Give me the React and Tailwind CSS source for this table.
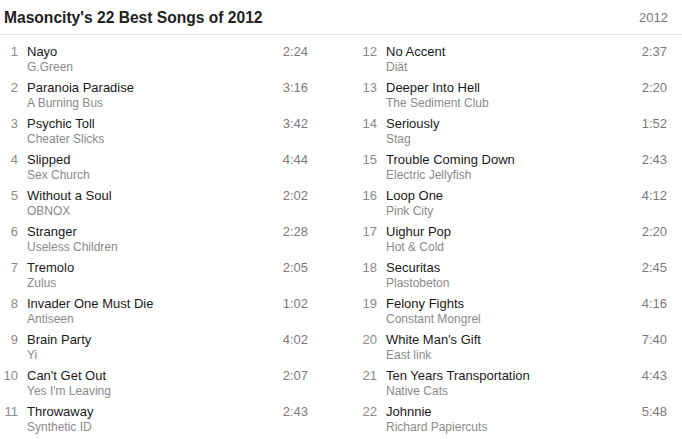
import React from "react";

const left = [
  ["1", "Nayo", "G.Green", "2:24"],
  ["2", "Paranoia Paradise", "A Burning Bus", "3:16"],
  ["3", "Psychic Toll", "Cheater Slicks", "3:42"],
  ["4", "Slipped", "Sex Church", "4:44"],
  ["5", "Without a Soul", "OBNOX", "2:02"],
  ["6", "Stranger", "Useless Children", "2:28"],
  ["7", "Tremolo", "Zulus", "2:05"],
  ["8", "Invader One Must Die", "Antiseen", "1:02"],
  ["9", "Brain Party", "Yi", "4:02"],
  ["10", "Can't Get Out", "Yes I'm Leaving", "2:07"],
  ["11", "Throwaway", "Synthetic ID", "2:43"],
];
const right = [
  ["12", "No Accent", "Diät", "2:37"],
  ["13", "Deeper Into Hell", "The Sediment Club", "2:20"],
  ["14", "Seriously", "Stag", "1:52"],
  ["15", "Trouble Coming Down", "Electric Jellyfish", "2:43"],
  ["16", "Loop One", "Pink City", "4:12"],
  ["17", "Uighur Pop", "Hot & Cold", "2:20"],
  ["18", "Securitas", "Plastobeton", "2:45"],
  ["19", "Felony Fights", "Constant Mongrel", "4:16"],
  ["20", "White Man's Gift", "East link", "7:40"],
  ["21", "Ten Years Transportation", "Native Cats", "4:43"],
  ["22", "Johnnie", "Richard Papiercuts", "5:48"],
];

function Row({ n, title, artist, time }) {
  return (
    <div className="flex h-[36px] w-[308px] pt-[2px]">
      <div className="w-[18px] text-right text-[13px] leading-[16px] text-[#8a8a8a]">{n}</div>
      <div className="ml-[9px] flex-1">
        <div className="text-[13px] leading-[16px] text-[#1a1a1a]">{title}</div>
        <div className="text-[12px] leading-[15px] text-[#8a8a8a]">{artist}</div>
      </div>
      <div className="text-[13px] leading-[16px] text-[#7a7a7a]">{time}</div>
    </div>
  );
}

export default function App() {
  return (
    <div className="w-[682px] h-[439px] bg-white overflow-hidden" style={{ fontFamily: '"Liberation Sans", Arial, sans-serif' }}>
      <div className="flex h-[35px] items-center justify-between border-b border-[#e6e6e6] pl-[4px] pr-[14px] pt-[2px]">
        <div className="text-[15.6px] font-bold leading-[20px] text-[#222]">Masoncity's 22 Best Songs of 2012</div>
        <div className="text-[13px] text-[#777]">2012</div>
      </div>
      <div className="flex pt-[7px]">
        <div className="w-[359px]">
          {left.map((r) => (
            <Row key={r[0]} n={r[0]} title={r[1]} artist={r[2]} time={r[3]} />
          ))}
        </div>
        <div className="w-[323px]">
          {right.map((r) => (
            <Row key={r[0]} n={r[0]} title={r[1]} artist={r[2]} time={r[3]} />
          ))}
        </div>
      </div>
    </div>
  );
}
